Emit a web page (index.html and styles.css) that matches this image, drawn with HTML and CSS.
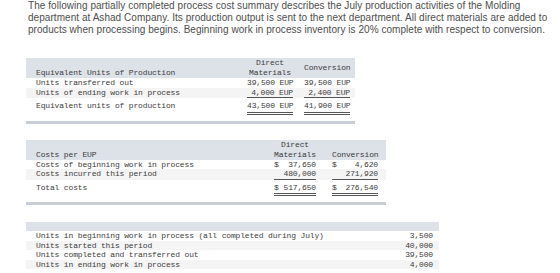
FILE: index.html
```html
<!DOCTYPE html>
<html>
<head>
<meta charset="utf-8">
<link rel="stylesheet" href="styles.css">
</head>
<body>
<div class="page">
  <p class="intro">The following partially completed process cost summary describes the July production activities of the Molding<br>department at Ashad Company. Its production output is sent to the next department. All direct materials are added to<br>products when processing begins. Beginning work in process inventory is 20% complete with respect to conversion.</p>

  <div class="tbl t1">
    <div class="row head">
      <div class="label hb">Equivalent Units of Production</div>
      <div class="c1 hc">Direct<br>Materials</div>
      <div class="c2 hc hm">Conversion</div>
    </div>
    <div class="row">
      <div class="label">Units transferred out</div>
      <div class="c1">39,500 EUP</div>
      <div class="c2">39,500 EUP</div>
    </div>
    <div class="row alt">
      <div class="label">Units of ending work in process</div>
      <div class="c1 under">4,000 EUP</div>
      <div class="c2 under">2,400 EUP</div>
    </div>
    <div class="row total">
      <div class="label">Equivalent units of production</div>
      <div class="c1 dbl">43,500 EUP</div>
      <div class="c2 dbl">41,900 EUP</div>
    </div>
    <div class="foot"></div>
  </div>

  <div class="tbl t2">
    <div class="row head">
      <div class="label hb">Costs per EUP</div>
      <div class="c1 hc">Direct<br>Materials</div>
      <div class="c2 hc">Conversion</div>
    </div>
    <div class="row">
      <div class="label">Costs of beginning work in process</div>
      <div class="c1 money"><span>$</span><span>37,650</span></div>
      <div class="c2 money"><span>$</span><span>4,620</span></div>
    </div>
    <div class="row alt">
      <div class="label">Costs incurred this period</div>
      <div class="c1 under">480,000</div>
      <div class="c2 under">271,920</div>
    </div>
    <div class="row total">
      <div class="label">Total costs</div>
      <div class="c1 dbl money"><span>$</span><span>517,650</span></div>
      <div class="c2 dbl money"><span>$</span><span>276,540</span></div>
    </div>
    <div class="foot"></div>
  </div>

  <div class="tbl t3">
    <div class="row head3"></div>
    <div class="row">
      <div class="label">Units in beginning work in process (all completed during July)</div>
      <div class="c1">3,500</div>
    </div>
    <div class="row alt">
      <div class="label">Units started this period</div>
      <div class="c1">40,000</div>
    </div>
    <div class="row">
      <div class="label">Units completed and transferred out</div>
      <div class="c1">39,500</div>
    </div>
    <div class="row alt">
      <div class="label">Units in ending work in process</div>
      <div class="c1">4,000</div>
    </div>
    <div class="foot"></div>
  </div>
</div>
</body>
</html>
```

FILE: styles.css
```css
html, body {
  margin: 0;
  padding: 0;
  background: #ffffff;
}

.page {
  padding: 0 0 0 26px;
}

.intro {
  margin: 0 0 22px 2px;
  font-family: "Liberation Sans", Arial, sans-serif;
  font-size: 10px;
  letter-spacing: 0.05px;
  line-height: 12px;
  color: #4d4d4d;
  white-space: nowrap;
}

.tbl {
  font-family: "Liberation Mono", "DejaVu Sans Mono", monospace;
  font-size: 8px;
  letter-spacing: -0.16px;
  line-height: 9.5px;
  color: #3c3c3c;
}

.t1 { width: 329px; margin-bottom: 16px; }
.t2 { width: 360px; margin-bottom: 17px; }
.t3 { width: 413px; }

.row {
  display: flex;
  padding-left: 10px;
  white-space: nowrap;
}

.t1 .row { padding-right: 5px; }
.t2 .row { padding-right: 8px; }
.t3 .row { padding-right: 6px; }

.label {
  flex: 1;
}

.c1, .c2 {
  text-align: right;
}

.t1 .c1 { width: 46px; }
.t1 .c2 { width: 46px; margin-left: 11px; }
.t2 .c1 { width: 42px; }
.t2 .c2 { width: 46px; margin-left: 16px; }

.head {
  background: #dde1e8;
  height: 20px;
  line-height: 10px;
}

.head > div {
  display: flex;
  flex-direction: column;
  justify-content: flex-end;
}

.head .hc {
  text-align: center;
}

.head .hm {
  justify-content: center;
}

.head3 {
  background: #dde1e8;
  height: 9px;
}

.alt {
  background: #f4f4f4;
}

.under {
  border-bottom: 1px solid #555555;
}

.total {
  padding-top: 3px;
}

.total .c1, .total .c2 {
  padding-bottom: 1px;
}

.dbl {
  border-bottom: 3px double #555555;
}

.money {
  display: flex;
  justify-content: space-between;
}

.foot {
  height: 3px;
  margin-top: 6px;
  background: #c9cdd4;
}
```
